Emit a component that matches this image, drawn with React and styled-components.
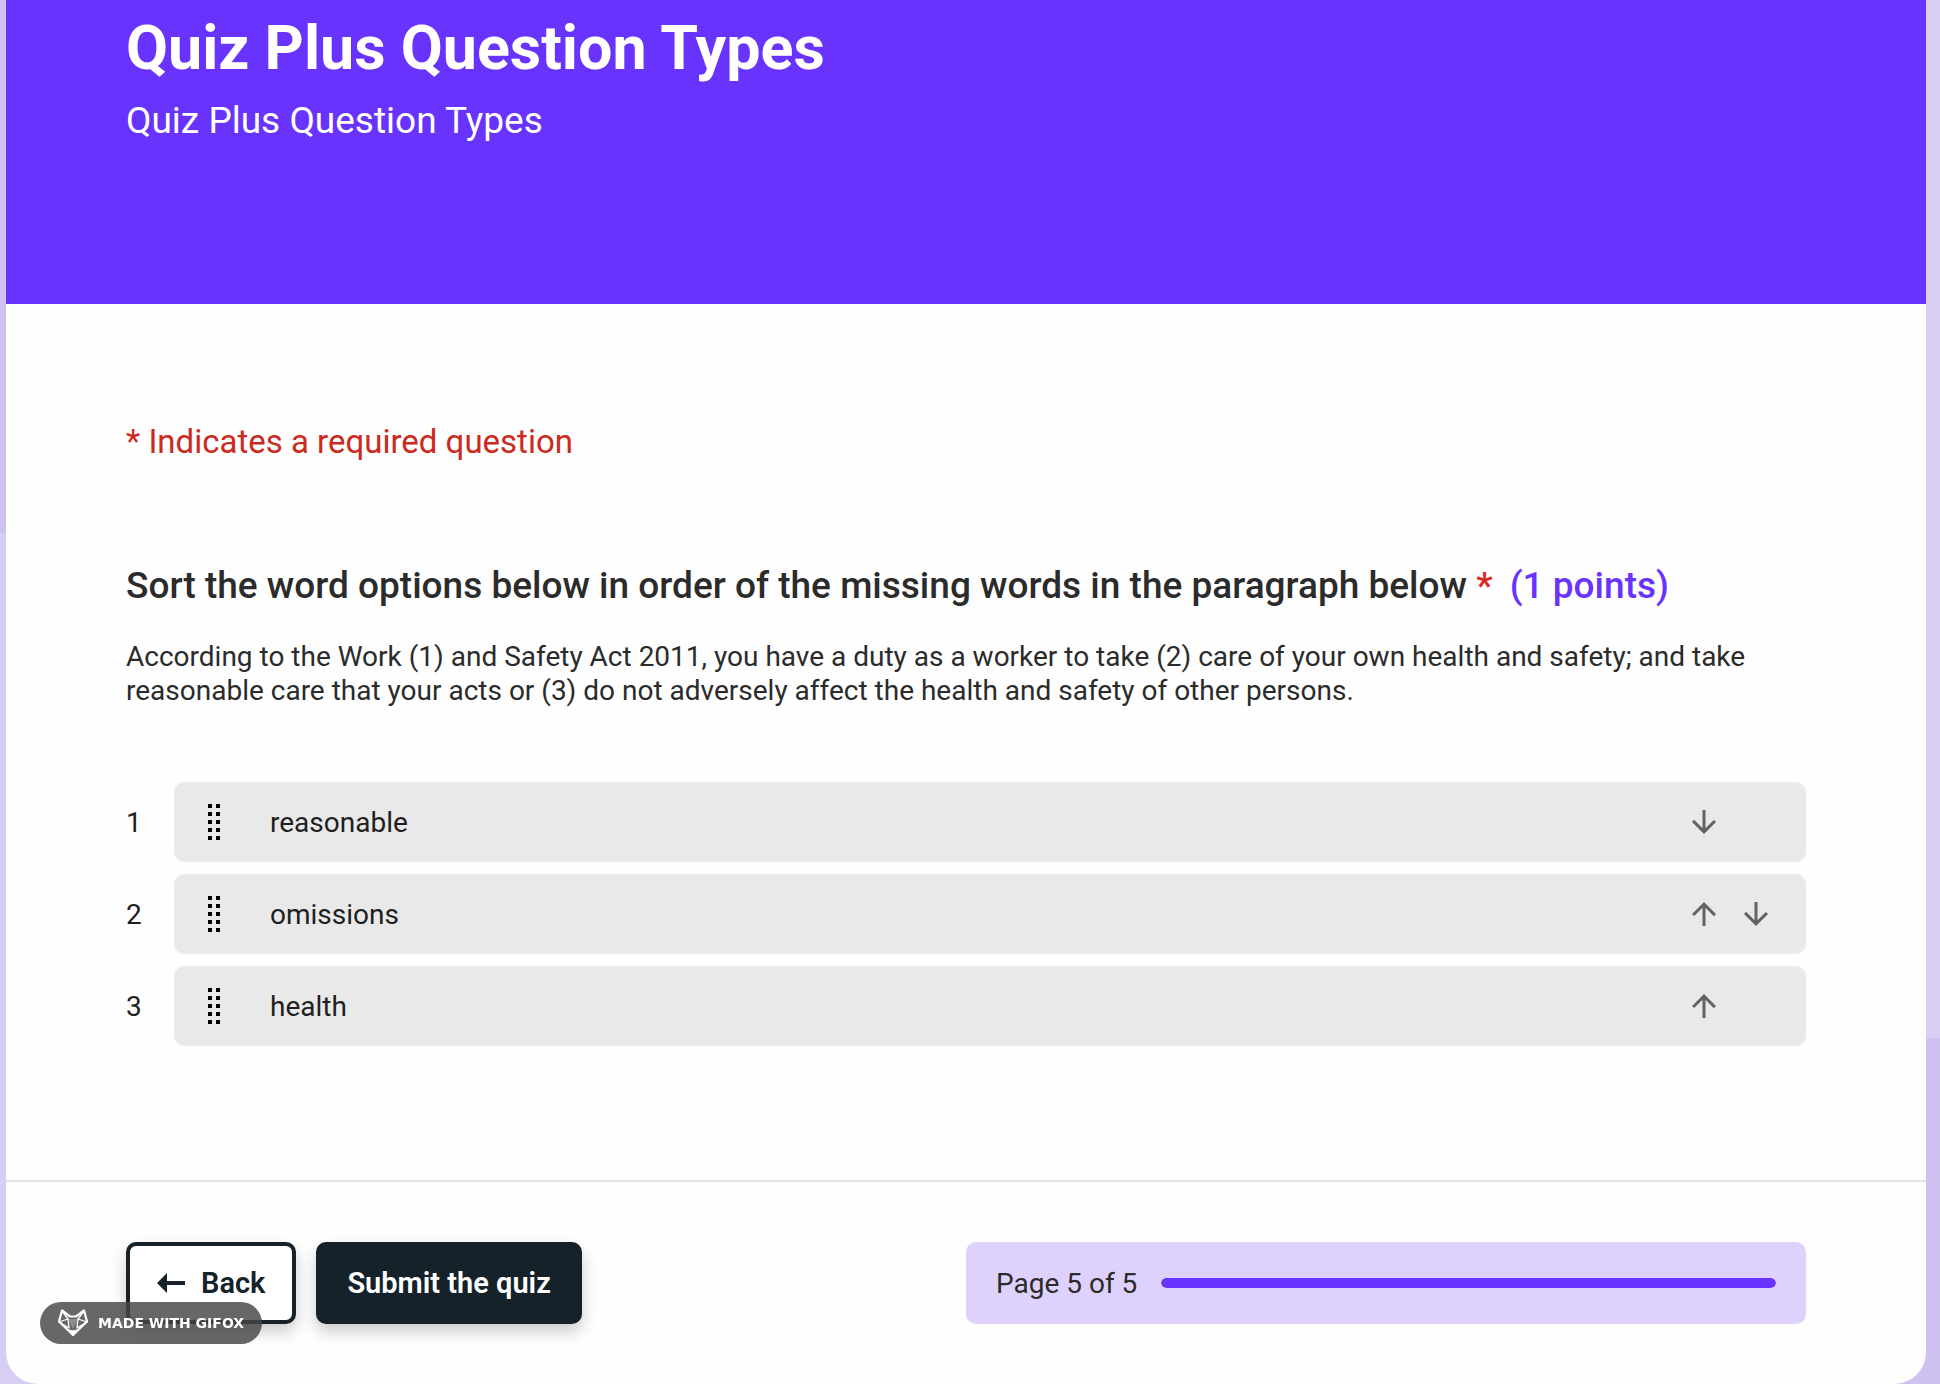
import React, { useState } from 'react';
import styled, { createGlobalStyle } from 'styled-components';
import { MdArrowDownward, MdArrowUpward } from 'react-icons/md';

const GlobalStyle = createGlobalStyle`
    * {
        box-sizing: border-box;
    }

    body {
        margin: 0;
        background-color: #d8cdf3;
        font-family: Roboto, sans-serif;
        color: #2b2b2b;
    }
`;

const Page = styled.div`
    display: flex;
    min-height: 100vh;
    padding: 0 14px 0 6px;
    background:
        linear-gradient(#cfc2f0, #cfc2f0) left top / 50% 533px no-repeat,
        linear-gradient(#cfc2f0, #cfc2f0) right bottom / 50% 346px no-repeat,
        #d8cdf3;
`;

const Card = styled.main`
    flex: 1;
    display: flex;
    flex-direction: column;
    background-color: #fefefe;
    border-radius: 0 0 32px 32px;
`;

const Header = styled.header`
    min-height: 304px;
    padding: 12px 120px;
    background-color: #6833fc;
    color: #ffffff;
`;

const Title = styled.h1`
    margin: 0 0 13px;
    font-size: 61px;
    line-height: 72px;
    font-weight: 700;
`;

const Subtitle = styled.p`
    margin: 0;
    font-size: 37px;
    line-height: 48px;
`;

const Content = styled.section`
    flex: 1;
    padding: 120px 120px 134px;
`;

const RequiredNote = styled.p`
    margin: 0 0 102px;
    color: #cb2a1f;
    font-size: 33px;
    line-height: 36px;
`;

const Question = styled.h2`
    margin: 0 0 30px;
    font-size: 37px;
    line-height: 48px;
    font-weight: 500;
`;

const Asterisk = styled.span`
    color: #d92c20;
`;

const Points = styled.span`
    margin-left: 8px;
    color: #6833fc;
`;

const Description = styled.p`
    margin: 0 0 74px;
    font-size: 28px;
    line-height: 34px;
`;

const SortList = styled.ol`
    display: flex;
    flex-direction: column;
    gap: 12px;
    margin: 0;
    padding: 0;
    list-style: none;
`;

const SortItem = styled.li`
    display: flex;
    align-items: center;
    font-size: 28px;
    color: #1f1f1f;
`;

const Position = styled.span`
    width: 48px;
`;

const Option = styled.div`
    flex: 1;
    display: flex;
    align-items: center;
    height: 80px;
    padding-right: 24px;
    background-color: #e9e9e9;
    border-radius: 10px;
`;

const DragHandle = styled.span`
    display: flex;
    justify-content: center;
    width: 80px;
    margin-right: 16px;
    cursor: grab;
`;

const OptionText = styled.span`
    flex: 1;
`;

const Moves = styled.div`
    display: flex;
    width: 104px;
`;

const MoveButton = styled.button`
    display: flex;
    align-items: center;
    justify-content: center;
    width: 52px;
    height: 52px;
    padding: 0;
    border: none;
    background: none;
    color: #636363;
    font-size: 36px;
    cursor: pointer;
`;

const Footer = styled.footer`
    display: grid;
    grid-template-columns: 1fr 1fr;
    padding: 60px 120px;
    border-top: 2px solid #e4e4e6;
`;

const Actions = styled.div`
    display: flex;
    gap: 20px;
`;

const ActionButton = styled.button`
    display: flex;
    align-items: center;
    gap: 16px;
    height: 82px;
    padding: 0 27px;
    border: 4px solid #152229;
    border-radius: 10px;
    background-color: ${(props) => (props.$primary ? '#152229' : '#ffffff')};
    color: ${(props) => (props.$primary ? '#ffffff' : '#152229')};
    box-shadow: 0 8px 16px rgba(0, 0, 0, 0.2);
    font-family: inherit;
    font-size: 29px;
    font-weight: 600;
    cursor: pointer;
`;

const ProgressBox = styled.div`
    display: flex;
    align-items: center;
    gap: 24px;
    height: 82px;
    padding: 0 30px;
    border-radius: 10px;
    background-color: #ded1fe;
    font-size: 28px;
`;

const Track = styled.div`
    flex: 1;
    height: 10px;
    border-radius: 5px;
    background-color: #ffffff;
    overflow: hidden;
`;

const Fill = styled.div`
    height: 100%;
    border-radius: 5px;
    background-color: #6833fc;
`;

const Badge = styled.div`
    position: fixed;
    left: 40px;
    bottom: 40px;
    display: flex;
    align-items: center;
    gap: 10px;
    height: 42px;
    padding: 0 18px;
    border-radius: 21px;
    background-color: rgba(70, 70, 70, 0.82);
    color: #ffffff;
    font-family: 'DejaVu Sans', sans-serif;
    font-size: 14px;
    font-weight: 700;
`;

const DotsIcon = () => (
    <svg width="12" height="36" viewBox="0 0 12 36" fill="#000000" aria-hidden="true">
        {[0, 8, 16, 24, 32].map((y) => (
            <path key={y} d={`M0 ${y}h4v4h-4zM8 ${y}h4v4h-4z`} />
        ))}
    </svg>
);

const BackArrow = () => (
    <svg width="28" height="20" viewBox="0 0 28 20" fill="currentColor" aria-hidden="true">
        <path d="M0 10L10 0v8h18v4H10v8z" />
    </svg>
);

const FoxIcon = () => (
    <svg
        width="30"
        height="28"
        viewBox="0 0 30 28"
        fill="none"
        stroke="currentColor"
        strokeLinejoin="round"
        aria-hidden="true"
    >
        <path d="M4 1.500L1 12.500L15 26L29 12.500L26 1.500L18 7.500H12z" strokeWidth="2.2" />
        <path d="M4 2L10 10L1 13L11 19L10 10M26 2L20 10L29 13L19 19L20 10" strokeWidth="1.3" />
        <path d="M10 10h10L15 20z" stroke="none" fill="currentColor" fillOpacity="0.25" />
        <path d="M11 21l4 1 4-1-4 5.500z" fill="currentColor" />
    </svg>
);

const App = () => {
    const [words, setWords] = useState(['reasonable', 'omissions', 'health']);
    const page = 5;
    const pageCount = 5;

    const move = (from, to) => {
        const next = [...words];
        [next[from], next[to]] = [next[to], next[from]];
        setWords(next);
    };

    return (
        <>
            <GlobalStyle />
            <Page>
                <Card>
                    <Header>
                        <Title>Quiz Plus Question Types</Title>
                        <Subtitle>Quiz Plus Question Types</Subtitle>
                    </Header>
                    <Content>
                        <RequiredNote>* Indicates a required question</RequiredNote>
                        <Question>
                            Sort the word options below in order of the missing words in the paragraph below{' '}
                            <Asterisk>*</Asterisk> <Points>(1 points)</Points>
                        </Question>
                        <Description>
                            According to the Work (1) and Safety Act 2011, you have a duty as a worker to take (2) care of
                            your own health and safety; and take reasonable care that your acts or (3) do not adversely
                            affect the health and safety of other persons.
                        </Description>
                        <SortList>
                            {words.map((word, index) => (
                                <SortItem key={word}>
                                    <Position>{index + 1}</Position>
                                    <Option>
                                        <DragHandle>
                                            <DotsIcon />
                                        </DragHandle>
                                        <OptionText>{word}</OptionText>
                                        <Moves>
                                            {index > 0 && (
                                                <MoveButton
                                                    aria-label={`Move ${word} up`}
                                                    onClick={() => move(index, index - 1)}
                                                >
                                                    <MdArrowUpward />
                                                </MoveButton>
                                            )}
                                            {index < words.length - 1 && (
                                                <MoveButton
                                                    aria-label={`Move ${word} down`}
                                                    onClick={() => move(index, index + 1)}
                                                >
                                                    <MdArrowDownward />
                                                </MoveButton>
                                            )}
                                        </Moves>
                                    </Option>
                                </SortItem>
                            ))}
                        </SortList>
                    </Content>
                    <Footer>
                        <Actions>
                            <ActionButton type="button">
                                <BackArrow />
                                Back
                            </ActionButton>
                            <ActionButton type="submit" $primary>
                                Submit the quiz
                            </ActionButton>
                        </Actions>
                        <ProgressBox>
                            <span>
                                Page {page} of {pageCount}
                            </span>
                            <Track>
                                <Fill style={{ width: `${(page / pageCount) * 100}%` }} />
                            </Track>
                        </ProgressBox>
                    </Footer>
                </Card>
            </Page>
            <Badge>
                <FoxIcon />
                MADE WITH GIFOX
            </Badge>
        </>
    );
};

export default App;
